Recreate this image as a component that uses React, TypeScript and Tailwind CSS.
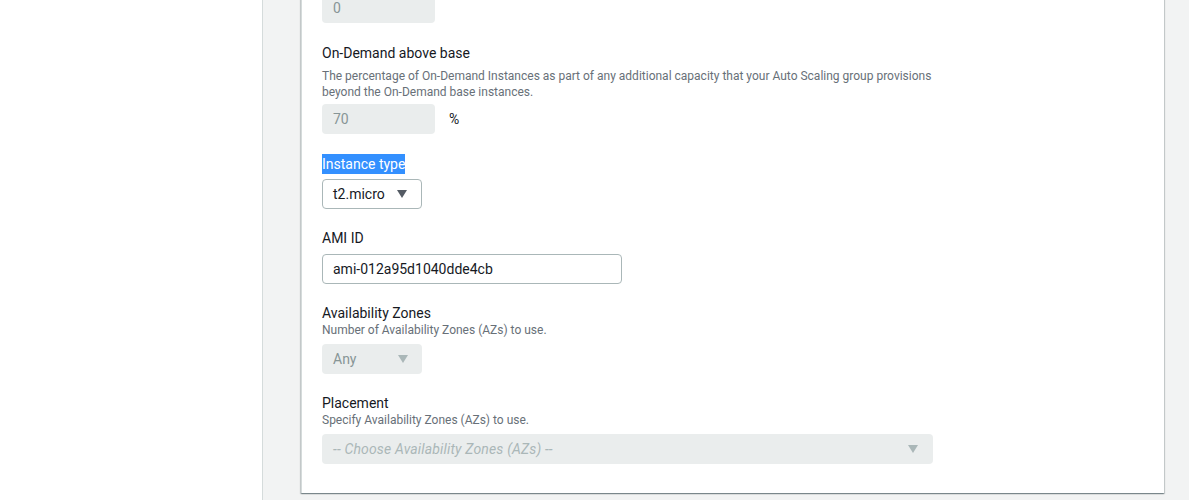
import React from 'react';

const Arrow: React.FC<{ color: string }> = ({ color }) => (
  <svg width="10" height="8" viewBox="0 0 10 8" className="shrink-0">
    <polygon points="0,0 10,0 5,8" fill={color} />
  </svg>
);

const Label: React.FC<{ children: React.ReactNode; className?: string }> = ({ children, className = '' }) => (
  <div className={`text-[14px] text-[#16191f] ${className}`}>{children}</div>
);

const Desc: React.FC<{ children: React.ReactNode; className?: string }> = ({ children, className = '' }) => (
  <div className={`text-[12px] leading-4 text-[#687078] ${className}`}>{children}</div>
);

export default function App() {
  return (
    <div className="flex h-[500px] w-full overflow-hidden bg-white font-['Roboto',sans-serif]">
      <div className="w-[262px] shrink-0 bg-white" />
      <div className="flex-1 border-l border-[#d5dbdb] bg-[#f2f3f3] pl-[38px] pr-[25px]">
        <div className="-mt-[27px] border-l border-[#d5dbdb] bg-white px-[20px] pt-[20px] pb-[29px] shadow-[0_1px_1px_0_rgba(0,28,36,0.3),1px_1px_1px_0_rgba(0,28,36,0.15),-1px_1px_1px_0_rgba(0,28,36,0.15)]">
          <div className="flex max-w-[611px] flex-col">
            <div className="flex h-[30px] w-[113px] items-center rounded-sm bg-[#eaeded] px-[11px] text-[14px] text-[#879596]">0</div>

            <Label className="mt-[20px] leading-5">On-Demand above base</Label>
            <Desc className="mt-[5px]">
              The percentage of On-Demand Instances as part of any additional capacity that your Auto Scaling group provisions
              <br />
              beyond the On-Demand base instances.
            </Desc>
            <div className="mt-[4px] flex items-center">
              <div className="flex h-[30px] w-[113px] items-center rounded-sm bg-[#eaeded] px-[11px] text-[14px] text-[#879596]">70</div>
              <span className="ml-[14px] text-[14px] text-[#16191f]">%</span>
            </div>

            <div className="mt-[20px] leading-5">
              <span className="inline-block bg-[#3390ff] text-[14px] leading-5 text-white">Instance type</span>
            </div>
            <div className="mt-[5px] flex h-[30px] w-[100px] items-center justify-between rounded-sm border border-[#aab7b8] bg-white pl-[10px] pr-[14px] text-[14px] text-[#16191f]">
              <span>t2.micro</span>
              <Arrow color="#545b64" />
            </div>

            <Label className="mt-[19px] leading-5">AMI ID</Label>
            <div className="mt-[6px] flex h-[30px] w-[300px] items-center rounded-sm border border-[#aab7b8] bg-white px-[10px] text-[14px] text-[#16191f]">
              ami-012a95d1040dde4cb
            </div>

            <Label className="mt-[20px] leading-[18px]">Availability Zones</Label>
            <Desc>Number of Availability Zones (AZs) to use.</Desc>
            <div className="mt-[6px] flex h-[30px] w-[100px] items-center justify-between rounded-sm bg-[#eaeded] pl-[11px] pr-[14px] text-[14px] text-[#879596]">
              <span>Any</span>
              <Arrow color="#aab7b8" />
            </div>

            <Label className="mt-[20px] leading-[18px]">Placement</Label>
            <Desc>Specify Availability Zones (AZs) to use.</Desc>
            <div className="mt-[6px] flex h-[30px] w-[611px] items-center justify-between rounded-sm bg-[#eaeded] pl-[11px] pr-[15px] text-[14px] italic tracking-[0.16px] text-[#aab7b8]">
              <span>-- Choose Availability Zones (AZs) --</span>
              <Arrow color="#aab7b8" />
            </div>
          </div>
        </div>
      </div>
    </div>
  );
}
